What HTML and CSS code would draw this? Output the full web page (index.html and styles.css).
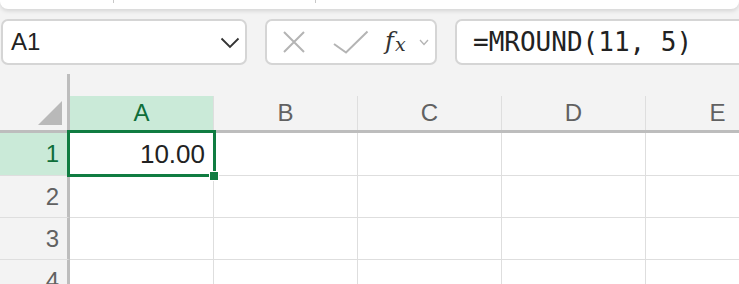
FILE: index.html
```html
<!DOCTYPE html>
<html>
<head>
<meta charset="utf-8">
<link rel="stylesheet" href="styles.css">
</head>
<body>
<div class="topbar"><span class="tick t1"></span><span class="tick t2"></span></div>
<div class="formula-row">
  <div class="box namebox">
    <span class="name">A1</span>
    <svg class="chev" width="20" height="12" viewBox="0 0 20 12"><polyline points="1.5,1.5 10,10 18.5,1.5" fill="none" stroke="#333" stroke-width="1.8"/></svg>
  </div>
  <div class="box buttons">
    <svg class="ico-x" width="24" height="24" viewBox="0 0 24 24"><path d="M2 2 L22 22 M22 2 L2 22" stroke="#b4b4b4" stroke-width="2" fill="none"/></svg>
    <svg class="ico-check" width="36" height="24" viewBox="0 0 36 24"><polyline points="1,14 13,22.5 34.5,1.5" fill="none" stroke="#b4b4b4" stroke-width="2"/></svg>
    <span class="fx"><span class="f">f</span><span class="x">x</span></span>
    <svg class="ico-chev" width="10" height="7" viewBox="0 0 10 7"><polyline points="1,1 5,5.5 9,1" fill="none" stroke="#b4b4b4" stroke-width="1.3"/></svg>
  </div>
  <div class="box formula">=MROUND(11, 5)</div>
</div>
<div class="sheet">
  <div class="grid">
    <div class="corner"><svg width="24" height="24" viewBox="0 0 24 24"><polygon points="24,0 24,24 0,24" fill="#b9b9b9"/></svg></div>
    <div class="colhead"><div class="label sel">A</div></div>
    <div class="colhead"><div class="label">B</div></div>
    <div class="colhead"><div class="label">C</div></div>
    <div class="colhead"><div class="label">D</div></div>
    <div class="colhead"><div class="label">E</div></div>

    <div class="rowhead sel">1</div>
    <div class="cell value">10.00</div>
    <div class="cell"></div><div class="cell"></div><div class="cell"></div><div class="cell"></div>

    <div class="rowhead">2</div>
    <div class="cell"></div><div class="cell"></div><div class="cell"></div><div class="cell"></div><div class="cell"></div>

    <div class="rowhead">3</div>
    <div class="cell"></div><div class="cell"></div><div class="cell"></div><div class="cell"></div><div class="cell"></div>

    <div class="rowhead">4</div>
    <div class="cell"></div><div class="cell"></div><div class="cell"></div><div class="cell"></div><div class="cell"></div>
  </div>
  <div class="selection"></div>
  <div class="handle"></div>
</div>
</body>
</html>
```
FILE: styles.css
```css
html, body {
  margin: 0;
  padding: 0;
}
body {
  width: 739px;
  height: 284px;
  overflow: hidden;
  background: #f3f3f3;
  font-family: "Liberation Sans", Arial, sans-serif;
  color: #222;
}
.topbar {
  position: relative;
  height: 9px;
  background: #fff;
  border-radius: 0 0 8px 8px;
  box-shadow: 0 2px 4px rgba(0,0,0,0.13);
}
.tick {
  position: absolute;
  top: 0;
  width: 1px;
  height: 3px;
  background: #c8c8c8;
}
.t1 { left: 113px; }
.t2 { left: 315px; }

.formula-row {
  display: flex;
  gap: 18px;
  margin-top: 10px;
  padding-left: 1px;
  height: 46px;
}
.box {
  box-sizing: border-box;
  height: 46px;
  background: #fff;
  border: 2px solid #d5d5d5;
  border-radius: 7px;
  display: flex;
  align-items: center;
}
.namebox {
  width: 246px;
  justify-content: space-between;
  padding: 0 5px 0 8px;
}
.name {
  font-size: 24px;
  color: #222;
}
.chev { margin-top: 2px; }
.buttons {
  width: 172px;
  padding-left: 15px;
}
.ico-check { margin-left: 27px; }
.fx {
  margin-left: 16px;
  font-family: "DejaVu Serif", serif;
  font-style: italic;
  color: #333;
  display: flex;
  align-items: baseline;
  margin-top: -2px;
}
.fx .f { font-size: 24px; }
.fx .x { font-size: 19px; margin-left: 1px; position: relative; top: 2px; }
.ico-chev { margin-left: 13px; }
.formula {
  flex: 1;
  margin-right: -12px;
  padding-left: 16px;
  font-family: "DejaVu Sans Mono", "Liberation Mono", monospace;
  font-size: 26px;
  color: #222;
}

.sheet {
  position: relative;
  margin-top: 9px;
}
.grid {
  display: grid;
  grid-template-columns: 70px repeat(5, 144px);
  grid-template-rows: 59px 43px repeat(3, 42px);
}
.corner {
  box-sizing: border-box;
  border-right: 3px solid #bdbdbd;
  border-bottom: 3px solid #bdbdbd;
  display: flex;
  justify-content: flex-end;
  align-items: flex-end;
  padding: 0 5px 5px 0;
}
.corner svg { display: block; }
.colhead {
  box-sizing: border-box;
  border-bottom: 3px solid #bdbdbd;
  display: flex;
  flex-direction: column;
  justify-content: flex-end;
}
.label {
  box-sizing: border-box;
  height: 34px;
  border-right: 1px solid #dedede;
  display: flex;
  align-items: center;
  justify-content: center;
  font-size: 24px;
  color: #616161;
}
.label.sel {
  background: #caead8;
  color: #0f6e3a;
}
.rowhead {
  box-sizing: border-box;
  border-right: 3px solid #bdbdbd;
  border-bottom: 1px solid #dedede;
  display: flex;
  align-items: center;
  justify-content: flex-end;
  padding-right: 8px;
  font-size: 24px;
  color: #616161;
}
.rowhead.sel {
  background: #caead8;
  color: #0f6e3a;
}
.cell {
  box-sizing: border-box;
  background: #fff;
  border-right: 1px solid #dedede;
  border-bottom: 1px solid #dedede;
}
.value {
  display: flex;
  align-items: center;
  justify-content: flex-end;
  padding-right: 8px;
  font-size: 26px;
  color: #222;
}
.selection {
  position: absolute;
  left: 67px;
  top: 56px;
  width: 149px;
  height: 47px;
  box-sizing: border-box;
  border: 3px solid #107c41;
}
.handle {
  position: absolute;
  left: 210px;
  top: 98px;
  width: 8px;
  height: 8px;
  background: #107c41;
  box-shadow: 0 0 0 1px #fff;
}
```
